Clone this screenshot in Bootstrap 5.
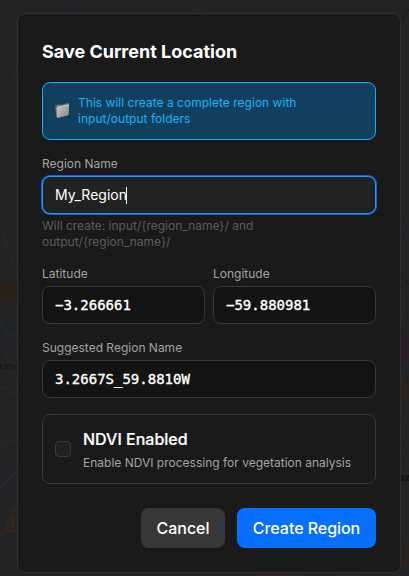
<!DOCTYPE html>
<html lang="en" data-bs-theme="dark">
<head>
<meta charset="utf-8">
<meta name="viewport" content="width=device-width, initial-scale=1">
<title>Save Current Location</title>
<link href="https://cdn.jsdelivr.net/npm/bootstrap@5.3.0/dist/css/bootstrap.min.css" rel="stylesheet">
<style>
body{font-family:Inter,"Liberation Sans",sans-serif;background:#242427;height:576px;overflow:hidden;padding:13px 8px 0 17px}
.map-bg{z-index:0}
.save-dialog{z-index:1;height:560px;background:#1a1a1a;border:1px solid #303030;border-radius:8px;color:#fff}
.dlg-title{font-size:18px;line-height:28px;font-weight:700}
.info-note{background:#11405e;border:1px solid #14aef5;border-radius:8px;color:#14b4fb;font-size:12px;line-height:16px;padding:12px;letter-spacing:.02px}
.fine{font-size:12px;line-height:16px;color:#a3a3a3}
.hint{color:#5c5c5c}
.field{height:38px;border:1px solid #383838;border-radius:8px;background:#141414;padding:0 12px;color:#fff;font-size:14px;line-height:20px}
.field.active-field,.field.active-field:focus{background:#222;border-color:#18a4fb;box-shadow:0 0 0 1px #2458e8}
.caret{width:1px;height:17px;margin-left:-1px;background:#fff}
.coord{font-family:"DejaVu Sans Mono",monospace;-webkit-text-stroke:.35px #fff}
.option-box{border:1px solid #383838;border-radius:8px;padding:12px}
.option-box .form-check-input{width:16px;height:16px;background:#222;border:1px solid #3a3a3a;border-radius:4px}
.opt-title{font-size:16px;line-height:24px;font-weight:500;-webkit-text-stroke:.2px #fff}
.dlg-btn{height:40px;border:0;border-radius:8px;font-size:16px;line-height:24px;font-weight:500;padding:8px 0;color:#fff;letter-spacing:-.05px}
.btn-cancel{width:84px;background:#383838}
.btn-create{width:139px;background:#0870ff}
</style>
</head>
<body class="position-relative m-0">
<svg class="map-bg position-absolute top-0 start-0" width="409" height="576" fill="none" aria-hidden="true">
  <path d="M69.500 0L68 14" stroke="#122a42"/>
  <path d="M0 89q12-2 15-12l3-16M188 0l3 5 5 1 3 5 5 1M0 223l4 10 3 12 5 9 1 9 4 5M6 241l-2 8M13 263l-4 5" stroke="#33291f"/>
  <path d="M0 278l17 3v20H0Z" fill="#292219"/>
  <path d="M0 289l17 5" stroke="#1e1c19" stroke-dasharray="2 2"/>
  <path d="M0 324l12 12 5 1M0 488l17-17" stroke="#15304a" stroke-width="1.500"/>
  <path d="M5 352l2 8 6 3-5 5 3 6M0 383q10-6 16-1-3 7-16 5M3 394l8-2 6 5M0 399l6 8-4 6M0 442l6 5 3-8 8 4M0 455l4-3" stroke="#30271f" stroke-width="1.500"/>
  <path d="M17 507l-5 5 1 6-7 4 2 7-5 2-3 7M15 517l-3 11M16 530l-8 2" stroke="#30271f" stroke-width="3"/>
  <path d="M401 23l8-14M401 273l8 12" stroke="#19191a"/>
  <path d="M401 218l8-1M401 298l4 6-3 10 7 5M401 414l6 5-4 5M401 445l8-4M401 460q8 1 8 8M409 540l-3 8 2 8-7 3" stroke="#2f2620"/>
  <path d="M401 233l8-1" stroke="#1c2947"/>
  <path d="M401 329q7 6 8 15-1 18-8 20Z" fill="#2b1c2c" stroke="#2c2118"/>
  <path d="M401 378l8 3v19l-8 4ZM404 548l5-4v20l-7 3Z" fill="#2b231c"/>
  <path d="M257 574h45v2h-45ZM338 574h22v2h-22Z" fill="#30202e"/>
  <text x="-1" y="369" font-family="Noto Sans, sans-serif" font-size="9.500" fill="#101010">ranc</text>
  <text x="399" y="481" font-family="Noto Sans, sans-serif" font-size="10" font-weight="700" fill="#101010">az</text>
</svg>
<main class="save-dialog position-relative p-4 d-flex flex-column gap-3">
  <h1 class="dlg-title m-0">Save Current Location</h1>
  <div class="info-note d-flex align-items-center">
    <svg class="flex-shrink-0 me-2" width="15" height="16" viewBox="0 0 15 16" aria-hidden="true">
      <defs><linearGradient id="folder" x1="0" y1="0" x2="1" y2="1"><stop offset="0" stop-color="#c9c9c9"/><stop offset="1" stop-color="#858585"/></linearGradient></defs>
      <path d="M.3 2.300l4-1.100 1 .7 8-2 .7.800-.6 10L1.200 14Z" fill="#6c7375"/>
      <path d="M1.800 5.200L3 3.800l10.700-2.200.3 1-.4 9.700L2 15Z" fill="url(#folder)"/>
      <path d="M2 5.200L3.200 4l10.500-2.200" stroke="#ddd" stroke-width=".6" fill="none"/>
    </svg>
    <div>This will create a complete region with<br>input/output folders</div>
  </div>
  <div class="d-flex flex-column gap-1">
    <div class="fine">Region Name</div>
    <div class="field active-field d-flex align-items-center" role="textbox">My_Region<span class="caret"></span></div>
    <div class="fine hint">Will create: input/{region_name}/ and<br>output/{region_name}/</div>
  </div>
  <div class="d-flex gap-2">
    <div class="flex-fill w-50 d-flex flex-column gap-1">
      <div class="fine">Latitude</div>
      <div class="field coord d-flex align-items-center">−3.266661</div>
    </div>
    <div class="flex-fill w-50 d-flex flex-column gap-1">
      <div class="fine">Longitude</div>
      <div class="field coord d-flex align-items-center">−59.880981</div>
    </div>
  </div>
  <div class="d-flex flex-column gap-1">
    <div class="fine">Suggested Region Name</div>
    <div class="field coord d-flex align-items-center">3.2667S_59.8810W</div>
  </div>
  <label class="option-box d-flex align-items-center">
    <input type="checkbox" class="form-check-input m-0 me-2 flex-shrink-0">
    <span class="d-flex flex-column gap-1 ms-1">
      <span class="opt-title">NDVI Enabled</span>
      <span class="fine">Enable NDVI processing for vegetation analysis</span>
    </span>
  </label>
  <div class="d-flex justify-content-end pt-2">
    <button type="button" class="btn dlg-btn btn-cancel me-2">Cancel</button>
    <button type="button" class="btn dlg-btn btn-create ms-1">Create Region</button>
  </div>
</main>
<script src="https://cdn.jsdelivr.net/npm/bootstrap@5.3.0/dist/js/bootstrap.bundle.min.js"></script>
</body>
</html>
